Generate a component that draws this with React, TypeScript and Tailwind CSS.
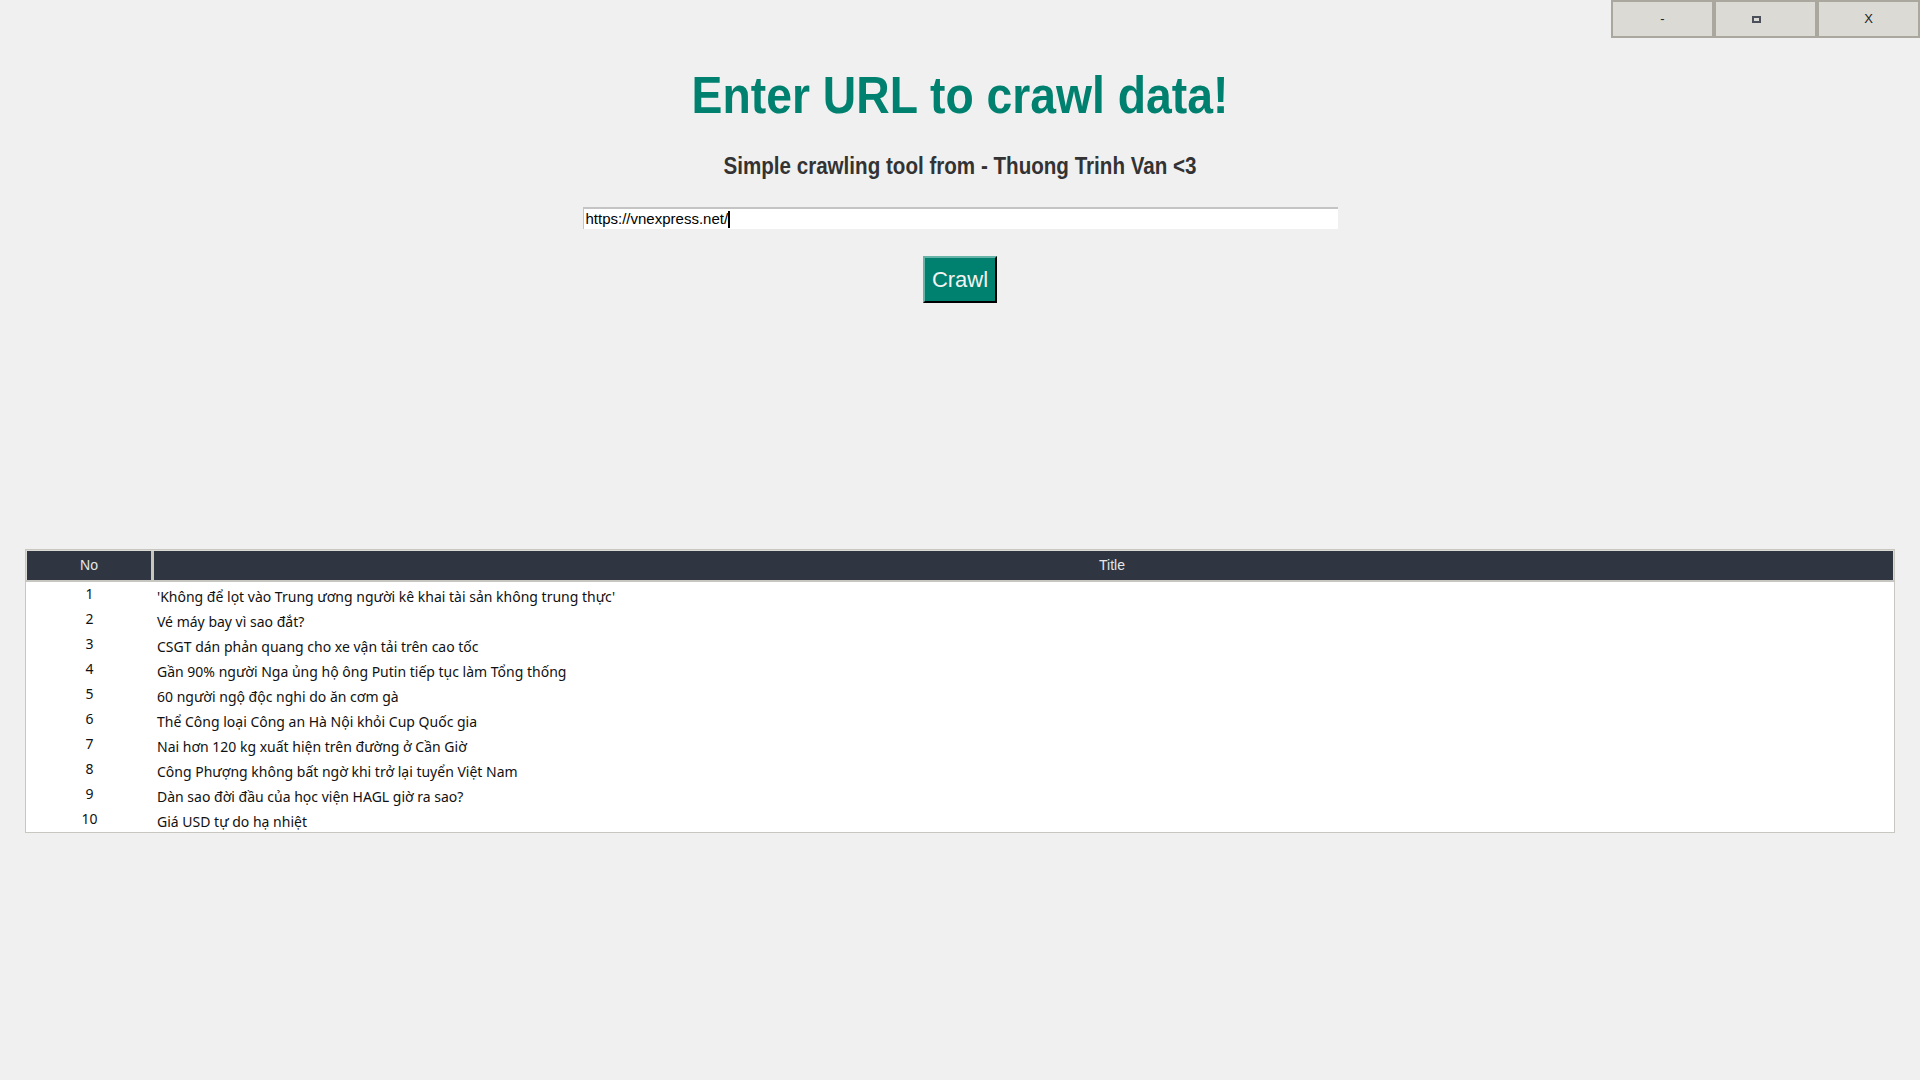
import React from 'react'

const rows = [
  "'Không để lọt vào Trung ương người kê khai tài sản không trung thực'",
  'Vé máy bay vì sao đắt?',
  'CSGT dán phản quang cho xe vận tải trên cao tốc',
  'Gần 90% người Nga ủng hộ ông Putin tiếp tục làm Tổng thống',
  '60 người ngộ độc nghi do ăn cơm gà',
  'Thể Công loại Công an Hà Nội khỏi Cup Quốc gia',
  'Nai hơn 120 kg xuất hiện trên đường ở Cần Giờ',
  'Công Phượng không bất ngờ khi trở lại tuyển Việt Nam',
  'Dàn sao đời đầu của học viện HAGL giờ ra sao?',
  'Giá USD tự do hạ nhiệt',
]

function WinButton({ children }: { children: React.ReactNode }) {
  return (
    <div className="w-[103px] h-[38px] flex items-center justify-center bg-[#dcdad5] border-2 border-[#aaa79f] text-[13px] text-[#222]">
      {children}
    </div>
  )
}

export default function App() {
  return (
    <div className="w-[1920px] h-[1080px] bg-[#f0f0f0] font-['Liberation_Sans',Arial,sans-serif] flex flex-col items-center overflow-hidden">
      {/* window controls */}
      <div className="w-full flex justify-end">
        <WinButton>-</WinButton>
        <WinButton>
          <span className="mr-[18px] w-[9px] h-[7px] border-2 border-[#4a4f5a]" />
        </WinButton>
        <WinButton>X</WinButton>
      </div>

      <h1 className="mt-[34px] text-[46.3px] leading-[46px] font-bold text-[#00806e] scale-y-[1.12]">
        Enter URL to crawl data!
      </h1>

      <p className="mt-[38px] text-[20.6px] leading-[20px] font-bold text-[#333] scale-y-[1.12]">
        Simple crawling tool from - Thuong Trinh Van &lt;3
      </p>

      <div className="mt-[31px] w-[755px] h-[22px] bg-white border-t-2 border-l border-[#c4c4c4] flex items-center pl-[2px] text-[15px] text-black">
        <span>https://vnexpress.net/</span>
        <span className="w-[2px] h-[17px] bg-black" />
      </div>

      <button className="mt-[27px] w-[74px] h-[47px] bg-[#00806e] border-2 border-t-[#66b3a8] border-l-[#66b3a8] border-r-black border-b-black text-[#f3f3f3] text-[22px] leading-none">
        Crawl
      </button>

      {/* result table */}
      <div className="mt-[246px] w-[1870px] border border-[#c8c6c0] bg-white">
        <div className="flex h-[32px] bg-[#dcdad5] border-b-2 border-[#c8c6c0] px-[1px] pt-[1px]">
          <div className="w-[127px] h-[29px] bg-[#303641] border-r-[3px] border-[#c9c6bf] flex items-center justify-center text-[14px] text-[#e6e6e6]">
            No
          </div>
          <div className="flex-1 h-[29px] bg-[#303641] flex items-center justify-center pl-[177px] text-[14px] text-[#e6e6e6]">
            Title
          </div>
        </div>
        <div className="flex flex-col font-['Noto_Sans',sans-serif] text-[14px] text-[#111]">
          {rows.map((title, i) => (
            <div key={i} className="flex h-[25px] items-center">
              <div className="w-[127px] text-center pb-[2px]">{i + 1}</div>
              <div className="pl-[4px] pt-[3px]">{title}</div>
            </div>
          ))}
        </div>
      </div>
    </div>
  )
}
